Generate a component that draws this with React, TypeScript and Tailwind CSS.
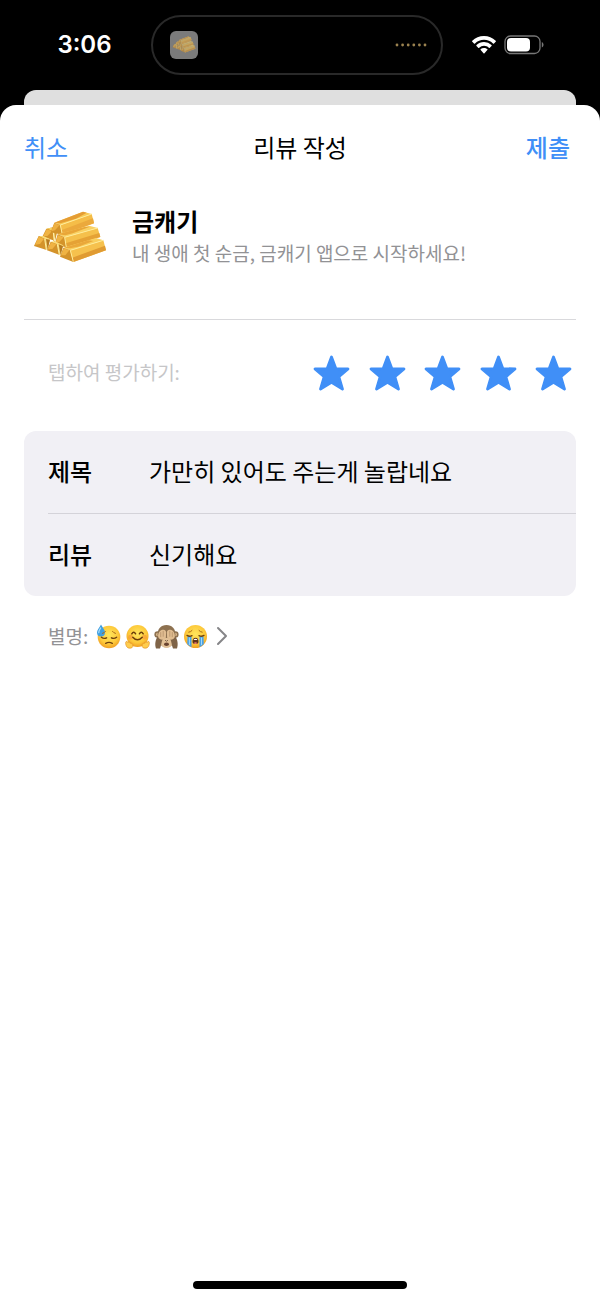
import { useState } from "react"

const APP_NAME = "금캐기"
const APP_TAGLINE = "내 생애 첫 순금, 금캐기 앱으로 시작하세요!"

function GoldBars({ className }: { className?: string }) {
  return (
    <svg viewBox="36 30 228 162" className={className} aria-hidden="true">
      {/* back left */}
      <path d="M80 86 L98 82 L112 94 L104 128 Z" fill="#d69a2c" />
      <path d="M80 86 L92 83 L104 89 L100 93 Z" fill="#f9d56a" />
      <path d="M67 110 L79 86 L100 93 L104 122 Z" fill="#d4932a" />
      <path d="M70 108 L80 88 L97 93 L82 108 Z" fill="#f0b444" />
      <path d="M98 93 L102 93 L106 124 L101 122 Z" fill="#fff0a8" />
      {/* top */}
      <path d="M103 68 L189 35 L215 42 L121 75 Z" fill="#f8ca55" />
      <path d="M103 68 L189 35 L200 38 L168 56 L121 70 Z" fill="#e59d34" />
      <path d="M121 75 L215 42 L222 70 L127 104 Z" fill="#f5bd48" />
      <path d="M124 91 L219 55 L222 70 L127 104 Z" fill="#eba93c" />
      <path d="M92 97 L103 68 L121 75 L127 104 Z" fill="#d4932a" />
      <path d="M94 94 L103 70 L119 75 L105 91 Z" fill="#eeb041" />
      <path d="M121 75 L127 104 M121 75 L215 42" fill="none" stroke="#ffec98" strokeWidth="3" />
      {/* middle right */}
      <path d="M113 103 L208 77 L233 84 L134 112 Z" fill="#f9d163" />
      <path d="M113 103 L196 80 L210 80 L158 100 L136 106 Z" fill="#e9a638" />
      <path d="M134 112 L233 84 L241 111 L139 142 Z" fill="#f5c04b" />
      <path d="M137 130 L238 99 L241 111 L139 142 Z" fill="#e5a235" />
      <path d="M104 134 L113 103 L134 112 L139 142 Z" fill="#d4932a" />
      <path d="M106 130 L114 106 L131 112 L118 126 Z" fill="#f0b343" />
      <path d="M134 112 L139 142 M134 112 L233 84" fill="none" stroke="#ffec98" strokeWidth="3" />
      {/* bottom left */}
      <path d="M56 108 L70 108 L90 117 L82 150 Z" fill="#fbdc79" />
      <path d="M78 117 L90 119 L83 150 Z" fill="#b77c20" />
      <path d="M42 138 L56 108 L75 116 L80 150 Z" fill="#d4932a" />
      <path d="M45 134 L56 110 L72 116 L60 132 Z" fill="#f0b343" />
      <path d="M74 116 L79 150" stroke="#fff0a0" strokeWidth="3" />
      {/* bottom centre */}
      <path d="M92 125 L104 124 L130 136 L121 166 Z" fill="#fbdc79" />
      <path d="M116 133 L129 138 L122 166 Z" fill="#b77c20" />
      <path d="M81 151 L92 125 L112 133 L119 165 Z" fill="#d4932a" />
      <path d="M84 148 L93 127 L109 133 L97 147 Z" fill="#f0b343" />
      <path d="M112 133 L118 165" stroke="#fff0a0" strokeWidth="3" />
      {/* bottom right */}
      <path d="M130 143 L228 114 L250 121 L151 151 Z" fill="#f9cf5f" />
      <path d="M132 143 L205 121 L220 123 L175 140 L150 145 Z" fill="#eaa83a" />
      <path d="M151 151 L250 121 L258 151 L160 186 Z" fill="#f6c14d" />
      <path d="M157 173 L255 137 L258 151 L160 186 Z" fill="#e09b32" />
      <path d="M120 170 L130 143 L151 151 L160 186 Z" fill="#d4932a" />
      <path d="M123 166 L131 145 L148 151 L136 166 Z" fill="#f0b343" />
      <path d="M151 151 L160 185 M151 151 L250 121" fill="none" stroke="#ffec98" strokeWidth="3" />
    </svg>
  )
}

function Wifi() {
  return (
    <svg width="24" height="18" viewBox="0 0 24 18" fill="#fff" aria-label="Wi-Fi">
      <path d="M12 0C7.400 0 3.300 1.800.3 4.700a.7.7 0 0 0 0 1l1.700 1.700a.7.7 0 0 0 1 0A13 13 0 0 1 12 3.700a13 13 0 0 1 9 3.700.7.7 0 0 0 1 0l1.700-1.700a.7.7 0 0 0 0-1A17 17 0 0 0 12 0Z" />
      <path d="M12 6.100c-2.900 0-5.500 1.100-7.500 2.900a.7.7 0 0 0 0 1l1.700 1.700a.7.7 0 0 0 1 0A7.200 7.200 0 0 1 12 9.800c1.800 0 3.500.7 4.800 1.900a.7.7 0 0 0 1 0l1.700-1.700a.7.7 0 0 0 0-1A11 11 0 0 0 12 6.100Z" />
      <path d="M12 11.900c-1.300 0-2.400.5-3.300 1.200a.7.7 0 0 0 0 1l2.800 3.100a.7.7 0 0 0 1 0l2.800-3.100a.7.7 0 0 0 0-1c-.9-.7-2-1.200-3.300-1.200Z" />
    </svg>
  )
}

function Battery() {
  return (
    <svg width="40" height="20" viewBox="0 0 40 20" aria-label="Battery">
      <rect x="1" y="1" width="35" height="17.500" rx="5.500" fill="none" stroke="#777" strokeWidth="1.300" />
      <rect x="3" y="3" width="23" height="13.500" rx="4" fill="#fff" />
      <path d="M37.800 7v5.600c1-.5 1.700-1.500 1.700-2.800s-.7-2.300-1.700-2.800Z" fill="#777" />
    </svg>
  )
}

function StatusBar() {
  return (
    <div className="grid h-[90px] grid-cols-[1fr_292px_1fr] items-center pr-1.5">
      <time className="pl-[18px] text-center font-['Inter'] text-2xl font-semibold text-white">3:06</time>
      <div className="flex h-15 items-center justify-between rounded-full border-2 border-[#292929] pr-3.5 pl-[17px]">
        <div className="flex size-7 items-center justify-center rounded-md bg-[#7b7b7b]">
          <GoldBars className="w-6 opacity-60" />
        </div>
        <svg width="32" height="4" viewBox="0 0 32 4" fill="#9c8350" aria-hidden="true">
          {[2, 7.6, 13.2, 18.8, 24.4, 30].map((cx) => (
            <circle key={cx} cx={cx} cy="2" r="1.400" />
          ))}
        </svg>
      </div>
      <div className="flex items-center gap-2 pl-[29px]">
        <Wifi />
        <Battery />
      </div>
    </div>
  )
}

function Star({ filled }: { filled: boolean }) {
  return (
    <svg width="37" height="37" viewBox="0 0 37 37" aria-hidden="true">
      <path
        d="M18.500 2 L22.800 13.600 L35 14 L25.900 21.800 L29.500 34.100 L18.500 27.200 L7.500 34.100 L11.100 21.800 L2 14 L14.200 13.600 Z"
        fill={filled ? "#408ff7" : "none"}
        stroke="#408ff7"
        strokeWidth="2.800"
        strokeLinejoin="round"
      />
    </svg>
  )
}

function FaceGradient({ id }: { id: string }) {
  return (
    <radialGradient id={id} cx="50%" cy="40%" r="62%">
      <stop offset="0" stopColor="#ffe65c" />
      <stop offset="0.650" stopColor="#fdc93b" />
      <stop offset="1" stopColor="#ee9a20" />
    </radialGradient>
  )
}

function SweatFace() {
  return (
    <svg width="25" height="25" viewBox="0 0 25 25">
      <defs>
        <FaceGradient id="sweat" />
      </defs>
      <circle cx="13" cy="13" r="11.300" fill="url(#sweat)" />
      <path d="M5 .5C3 4 1 6 1 8.500a4 4 0 0 0 8 0C9 6 7 4 5 .5Z" fill="#3f9fe0" />
      <path d="M4.600 4C3.500 6 2.700 7 2.800 8.600" fill="none" stroke="#a9dcfb" strokeWidth="1.300" strokeLinecap="round" />
      <path d="M5.400 13.200q2.500 2 5.200.6M15.400 13.800q2.700 1.400 5.200-.6M9.700 19.300q3.300-1.800 6.600 0" fill="none" stroke="#70420f" strokeWidth="1.400" strokeLinecap="round" />
      <path d="M9.500 7.400q-1 1.500-3 2M16.500 7.400q1 1.500 3 2" fill="none" stroke="#a8691a" strokeWidth="1" strokeLinecap="round" />
    </svg>
  )
}

function HugFace() {
  return (
    <svg width="25" height="25" viewBox="0 0 25 25">
      <defs>
        <FaceGradient id="hug" />
      </defs>
      <circle cx="12.500" cy="12" r="11" fill="url(#hug)" />
      <circle cx="5.500" cy="13.200" r="2.400" fill="#f58a35" opacity="0.500" />
      <circle cx="19.500" cy="13.200" r="2.400" fill="#f58a35" opacity="0.500" />
      <path d="M6.800 9.800q1.900-3.300 3.800 0M14.400 9.800q1.900-3.300 3.800 0" fill="none" stroke="#6b3d0b" strokeWidth="1.500" strokeLinecap="round" />
      <path d="M7.800 13.200q4.700 5.300 9.400 0" fill="none" stroke="#6b3d0b" strokeWidth="1.500" strokeLinecap="round" />
      <g fill="#ffcd4e" stroke="#df8c1e" strokeWidth="0.600" strokeLinejoin="round">
        <path d="M1.200 17.500c.8-.4 1.400.2 1.800 1.200.2-1.500 1.700-1.500 1.900 0l.3.7c.6-1 1.800-.4 1.600.6 1.200-.1 1.400 1 .8 1.700.5.900-.2 2-1.300 2.200-1.400.6-3.600.3-4.600-1.200-1-1.600-1.600-4.600-.5-5.200Z" />
        <path d="M23.800 17.500c-.8-.4-1.400.2-1.800 1.200-.2-1.500-1.700-1.500-1.900 0l-.3.7c-.6-1-1.800-.4-1.600.6-1.200-.1-1.400 1-.8 1.700-.5.900.2 2 1.300 2.200 1.400.6 3.600.3 4.600-1.200 1-1.600 1.600-4.600.5-5.200Z" />
      </g>
    </svg>
  )
}

function MonkeyFace() {
  return (
    <svg width="25" height="25" viewBox="0 0 25 25">
      <circle cx="3.600" cy="10.500" r="3.200" fill="#8d7150" />
      <circle cx="21.400" cy="10.500" r="3.200" fill="#8d7150" />
      <circle cx="3.700" cy="10.500" r="1.700" fill="#dfbd90" />
      <circle cx="21.300" cy="10.500" r="1.700" fill="#dfbd90" />
      <path d="M12.500 1c-5.600 0-9 4-9 9.500 0 8 4 13 9 13s9-5 9-13c0-5.500-3.400-9.500-9-9.500Z" fill="#8d7150" />
      <path d="M12.500 14c-4.200 0-6 2.600-6 5s2.500 4.800 6 4.800 6-2.300 6-4.800-1.800-5-6-5Z" fill="#e2c197" />
      <path d="M2 24.500c-1.500-4.500-.5-9 2-12.500l5 2.500c-1.800 3-1.500 7-3 10ZM23 24.500c1.500-4.500.5-9-2-12.500l-5 2.500c1.800 3 1.500 7 3 10Z" fill="#7f6448" />
      <path d="M4.200 13C3.600 9.500 6 6 8.500 5.800c2-.5 3.400.5 3.600 2.500l-.2 5.200c-.8 2.600-6.300 3.300-7.700-.5ZM20.800 13c.6-3.500-1.800-7-4.300-7.200-2-.5-3.400.5-3.600 2.500l.2 5.200c.8 2.600 6.300 3.300 7.700-.5Z" fill="#e0bd91" />
      <path d="M6.700 8.500v4.200M9.200 7.300v5M18.300 8.500v4.200M15.800 7.300v5" stroke="#b08c65" strokeWidth="0.700" strokeLinecap="round" />
      <path d="M11.500 16.400l.5.600M13.500 16.400l-.5.600" stroke="#634a34" strokeWidth="0.900" strokeLinecap="round" />
      <ellipse cx="12.500" cy="20.300" rx="2.500" ry="1.700" fill="#69432f" />
    </svg>
  )
}

function CryFace() {
  return (
    <svg width="25" height="25" viewBox="0 0 25 25">
      <defs>
        <FaceGradient id="cry" />
      </defs>
      <circle cx="12.500" cy="12.500" r="11.500" fill="url(#cry)" />
      <path d="M4.500 12.500h4v10.700Q6 22 4.200 20ZM16.500 12.500h4l.3 7.500q-1.800 2-4.300 3.200Z" fill="#4ba2e6" />
      <path d="M6.400 13.500v7.500M18.500 13.500v7.500" stroke="#a3d8f8" strokeWidth="1" />
      <path d="M4 11.400q2.500 1.600 5 .2M16 11.600q2.500 1.400 5-.2" fill="none" stroke="#70420f" strokeWidth="1.300" strokeLinecap="round" />
      <path d="M9 6.500q-1.200 1.500-3.200 1.700M16 6.500q1.200 1.500 3.200 1.700" fill="none" stroke="#a8691a" strokeWidth="1" strokeLinecap="round" />
      <path d="M12.500 13.800c-1.900 0-3 1.700-3 3.600 0 1.700 1.200 2.700 3 2.700s3-1 3-2.700c0-1.900-1.100-3.600-3-3.600Z" fill="#61331a" />
      <path d="M10.800 15.200q1.700-1 3.400 0v.8h-3.400Z" fill="#fff" />
      <path d="M10.500 19.300q2-2 4 0-2 1.200-4 0Z" fill="#ef7a6c" />
    </svg>
  )
}

export default function App() {
  const [rating, setRating] = useState(5)
  const [title, setTitle] = useState("가만히 있어도 주는게 놀랍네요")
  const [review, setReview] = useState("신기해요")

  return (
    <div className="flex min-h-screen flex-col bg-black font-['Noto_Sans_CJK_KR',sans-serif] text-black">
      <StatusBar />
      <div className="mx-6 h-[15px] rounded-t-xl bg-[#dfdfdf]" />

      <main className="flex flex-1 flex-col rounded-t-2xl bg-white px-6 pb-3">
        <header className="grid h-[86px] grid-cols-3 items-center pb-0.5 text-2xl">
          <button type="button" className="justify-self-start text-[#408ff7]">취소</button>
          <h1 className="text-center">리뷰 작성</h1>
          <button type="button" className="justify-self-end pr-1.5 font-medium text-[#408ff7]">제출</button>
        </header>

        <section className="flex items-center gap-6 border-b border-[#d9d9dc] pt-3.5 pb-[50px] pl-2">
          <GoldBars className="w-[76px]" />
          <div>
            <h2 className="text-2xl leading-8 font-bold">{APP_NAME}</h2>
            <p className="text-[19px] leading-8 text-[#929295]">{APP_TAGLINE}</p>
          </div>
        </section>

        <section className="mb-1 flex h-[107px] items-center justify-between pr-1 pl-6">
          <span className="pb-0.5 text-[19px] text-[#c6c6c8]">탭하여 평가하기:</span>
          <div className="flex w-[259px] justify-between">
            {[1, 2, 3, 4, 5].map((n) => (
              <button key={n} type="button" aria-label={`${n}점`} onClick={() => setRating(n)}>
                <Star filled={n <= rating} />
              </button>
            ))}
          </div>
        </section>

        <form className="rounded-xl bg-[#f1f0f5] pl-6 text-2xl">
          <div className="flex h-[83px] items-center border-b border-[#d4d3d9] pb-0.5">
            <label htmlFor="title" className="w-25 font-medium">제목</label>
            <input
              id="title"
              value={title}
              onChange={(e) => setTitle(e.target.value)}
              className="min-w-0 flex-1 bg-transparent pl-px outline-none"
            />
          </div>
          <div className="flex h-[82px] items-center pb-0.5">
            <label htmlFor="review" className="w-25 font-medium">리뷰</label>
            <input
              id="review"
              value={review}
              onChange={(e) => setReview(e.target.value)}
              className="min-w-0 flex-1 bg-transparent pl-px outline-none"
            />
          </div>
        </form>

        <button type="button" className="flex h-20 items-center gap-1 self-start pl-6 text-[#929295]">
          <span className="mr-1 text-[19px]">별명:</span>
          <SweatFace />
          <HugFace />
          <MonkeyFace />
          <CryFace />
          <svg width="25" height="20" viewBox="0 0 25 20" aria-hidden="true">
            <path d="M6 2l8 8-8 8" fill="none" stroke="#858588" strokeWidth="2" strokeLinecap="round" strokeLinejoin="round" />
          </svg>
        </button>

        <div className="mx-auto mt-auto h-2 w-[214px] rounded-full bg-black" />
      </main>
    </div>
  )
}
